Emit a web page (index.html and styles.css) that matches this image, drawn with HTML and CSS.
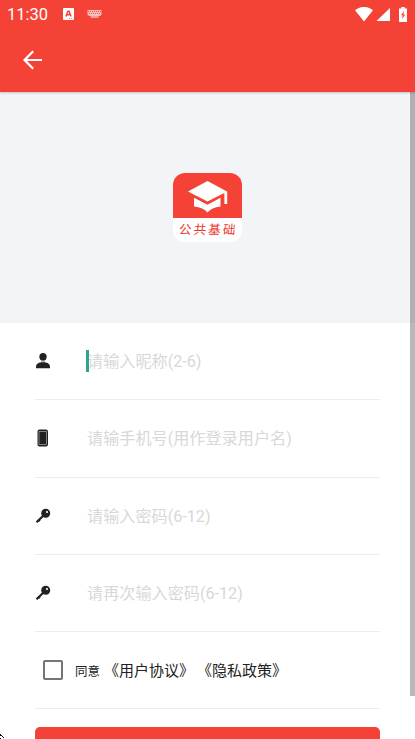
FILE: index.html
```html
<!DOCTYPE html>
<html lang="zh-CN">
<head>
<meta charset="utf-8">
<title>注册</title>
<link rel="stylesheet" href="styles.css">
</head>
<body>
<div class="screen">
  <header class="header">
    <div class="status">
      <span class="clock">11:30</span>
      <svg class="app-icon" width="11" height="12" viewBox="0 0 11 12"><rect width="11" height="12" rx="1" fill="#fff"/><path d="M2.9 8.5 5 3.2h1l2.1 5.3M3.7 6.8h3.6" fill="none" stroke="#f44336" stroke-width="1.5"/><path d="M6 10.5h1M8 10.5h1" stroke="#f44336" stroke-width=".7"/></svg>
      <svg class="keyboard" width="15" height="8" viewBox="0 0 15 8"><path d="M.5 0h14v5l-2 1h-10l-2-1z" fill="#fff" opacity=".65"/><path d="M1 1.5h13M2 3.5h11" stroke="#f44336" stroke-width=".8" stroke-dasharray="1 1"/><path d="M3.5 7h8" stroke="#fff" stroke-width="1.2" opacity=".8"/></svg>
      <span class="spacer"></span>
      <svg class="wifi" width="18" height="15" viewBox="0 0 18 15"><path d="M0 3.2C5-1.1 13-1.1 18 3.2L9 14.5z" fill="#fff"/></svg>
      <svg class="signal" width="14" height="14" viewBox="0 0 14 14"><path d="M14 0v13H.5z" fill="#fff"/></svg>
      <svg class="battery" width="8" height="15" viewBox="0 0 8 15"><path d="M2.2 0h3.6v1.4H8V15H0V1.4h2.2z" fill="#fff"/><path d="M5.2 3.7 2 8.3h1.7l-.7 4L6.2 7.4H4.4z" fill="#f44336"/></svg>
    </div>
    <div class="toolbar">
      <svg width="20" height="20" viewBox="0 0 20 20"><path d="M19 10H2M10.2 1.300 1.500 10l8.700 8.700" fill="none" stroke="#fff" stroke-width="2.200"/></svg>
    </div>
  </header>
  <main class="content">
    <section class="hero">
      <div class="logo">
        <svg class="cap" width="69" height="45" viewBox="0 0 69 45"><path d="M15 18.500 34.500 8 54 18.500 34.500 28.500z" fill="#fff"/><path d="m52 18 2.200.7V31h-2.800V20.500L36 17.500z" fill="#fff"/><path d="m21 24.800 13.500 7 13-7v8.700q-9 1-13 6-4-5-13.500-6z" fill="#fff"/></svg>
        <span class="logo-name">公共基础</span>
      </div>
    </section>
    <form class="form">
      <label class="row">
        <svg class="icon" width="16" height="16" viewBox="0 0 16 16"><path d="M8 0c2.300 0 3.700 1.500 3.700 3.700S10.200 8 8 8 4.300 5.900 4.300 3.700 5.700 0 8 0z" fill="#212121"/><path d="M6 7.500h4V10H6z" fill="#bbb"/><path d="M1 15.200v-1.500C1 10.500 4 9.200 8 9.200s7 1.300 7 4.500v1.500z" fill="#212121"/></svg>
        <span class="hint focused">请输入昵称(2-6)</span>
      </label>
      <label class="row tall">
        <svg class="icon phone" width="16" height="18" viewBox="0 0 16 18"><rect x="2.500" y=".5" width="10.500" height="17" rx="2" fill="#212121"/><rect x="4" y="2.500" width="7.500" height="13" fill="#212121" stroke="#aaa" stroke-width=".7"/></svg>
        <span class="hint">请输手机号(用作登录用户名)</span>
      </label>
      <label class="row">
        <svg class="icon" width="16" height="16" viewBox="0 0 16 16"><path d="m8 8-6.500 6.300M3.500 11.800l1.300 1.500" fill="none" stroke="#212121" stroke-width="2.200"/><circle cx="10.700" cy="5.300" r="4.500" fill="#212121"/><circle cx="12" cy="4" r="1.100" fill="#fff"/></svg>
        <span class="hint">请输入密码(6-12)</span>
      </label>
      <label class="row">
        <svg class="icon" width="16" height="16" viewBox="0 0 16 16"><path d="m8 8-6.500 6.300M3.500 11.800l1.300 1.500" fill="none" stroke="#212121" stroke-width="2.200"/><circle cx="10.700" cy="5.300" r="4.500" fill="#212121"/><circle cx="12" cy="4" r="1.100" fill="#fff"/></svg>
        <span class="hint">请再次输入密码(6-12)</span>
      </label>
      <div class="row agree">
        <span class="checkbox"></span>
        <span class="agree-text">同意</span>
        <span class="policy">《用户协议》</span>
        <span class="policy">《隐私政策》</span>
      </div>
      <div class="submit"></div>
    </form>
    <div class="scrollbar"></div>
    <svg class="corner" width="5" height="5" viewBox="0 0 5 5"><path d="M0 0h1v1h1v1h1v1h1v1H3V3H2V2H0zM0 4h1v1H0z" fill="#111"/></svg>
  </main>
</div>
</body>
</html>
```
FILE: styles.css
```css
* { box-sizing: border-box; }
html, body { margin: 0; height: 100%; overflow: hidden; }
body {
  font-family: Roboto, "Noto Sans CJK SC", sans-serif;
  background: #fff;
  color: #212121;
}
svg { display: block; flex: none; }
.screen {
  position: relative;
  display: flex;
  flex-direction: column;
  width: 415px;
  height: 739px;
  overflow: hidden;
}
.header {
  flex: none;
  height: 92px;
  background: #f44336;
  position: relative;
  z-index: 1;
  box-shadow: 0 1px 2px rgba(0, 0, 0, .2);
}
.status {
  display: flex;
  align-items: center;
  height: 28px;
  padding: 0 8px 0 7px;
  color: #fff;
}
.clock { width: 56px; font-size: 16.500px; line-height: 28px; padding-top: 1px; }
.keyboard { margin-left: 13px; }
.spacer { flex: 1; }
.signal { margin: 1px 9px 0 3px; }
.toolbar { height: 64px; padding: 22px 0 0 23px; }
.content { flex: none; height: 647px; position: relative; }
.hero {
  display: flex;
  justify-content: center;
  height: 231px;
  padding-top: 81px;
  background: #f3f4f8;
}
.logo {
  width: 69px;
  height: 69px;
  border-radius: 12px;
  background: #fff;
  overflow: hidden;
}
.cap { background: #f44336; }
.logo-name {
  display: block;
  font-family: "Noto Sans CJK SC", sans-serif;
  font-size: 12.500px;
  line-height: 22px;
  letter-spacing: 2.200px;
  padding-left: 6px;
  color: #e8392e;
  white-space: nowrap;
  transform: skewX(-6deg);
}
.form { padding: 0 35px; }
.row {
  display: flex;
  align-items: center;
  height: 77px;
  border-bottom: 1px solid #ececec;
}
.tall { height: 78px; }
.icon { width: 16px; }
.phone { margin-bottom: 1px; }
.hint {
  position: relative;
  margin: 1px 0 0 36px;
  padding-top: 1px;
  font-size: 16.150px;
  line-height: 22px;
  color: #d8d8d8;
  white-space: nowrap;
}
.tall .hint { padding-top: 0; }
.focused::before {
  content: "";
  position: absolute;
  left: -1px;
  top: 0;
  width: 3px;
  height: 22px;
  background: #30a393;
}
.focused { margin-top: 0; }
.agree { padding-left: 8px; white-space: nowrap; }
.checkbox {
  width: 20px;
  height: 20px;
  margin-bottom: 1px;
  border: 2px solid #757575;
  border-radius: 2px;
}
.agree-text { font-size: 12.500px; margin: 0 4px 0 12px; }
.policy { font-size: 15px; width: 90px; margin-bottom: 2px; }
.policy + .policy { margin-left: 3px; }
.submit {
  height: 44px;
  margin-top: 18px;
  border-radius: 5px;
  background: #f44336;
}
.scrollbar {
  position: absolute;
  right: 0;
  top: 0;
  width: 5px;
  height: 604px;
  background: rgba(0, 0, 0, .28);
}
.corner { position: absolute; left: 0; top: 642px; }
```
